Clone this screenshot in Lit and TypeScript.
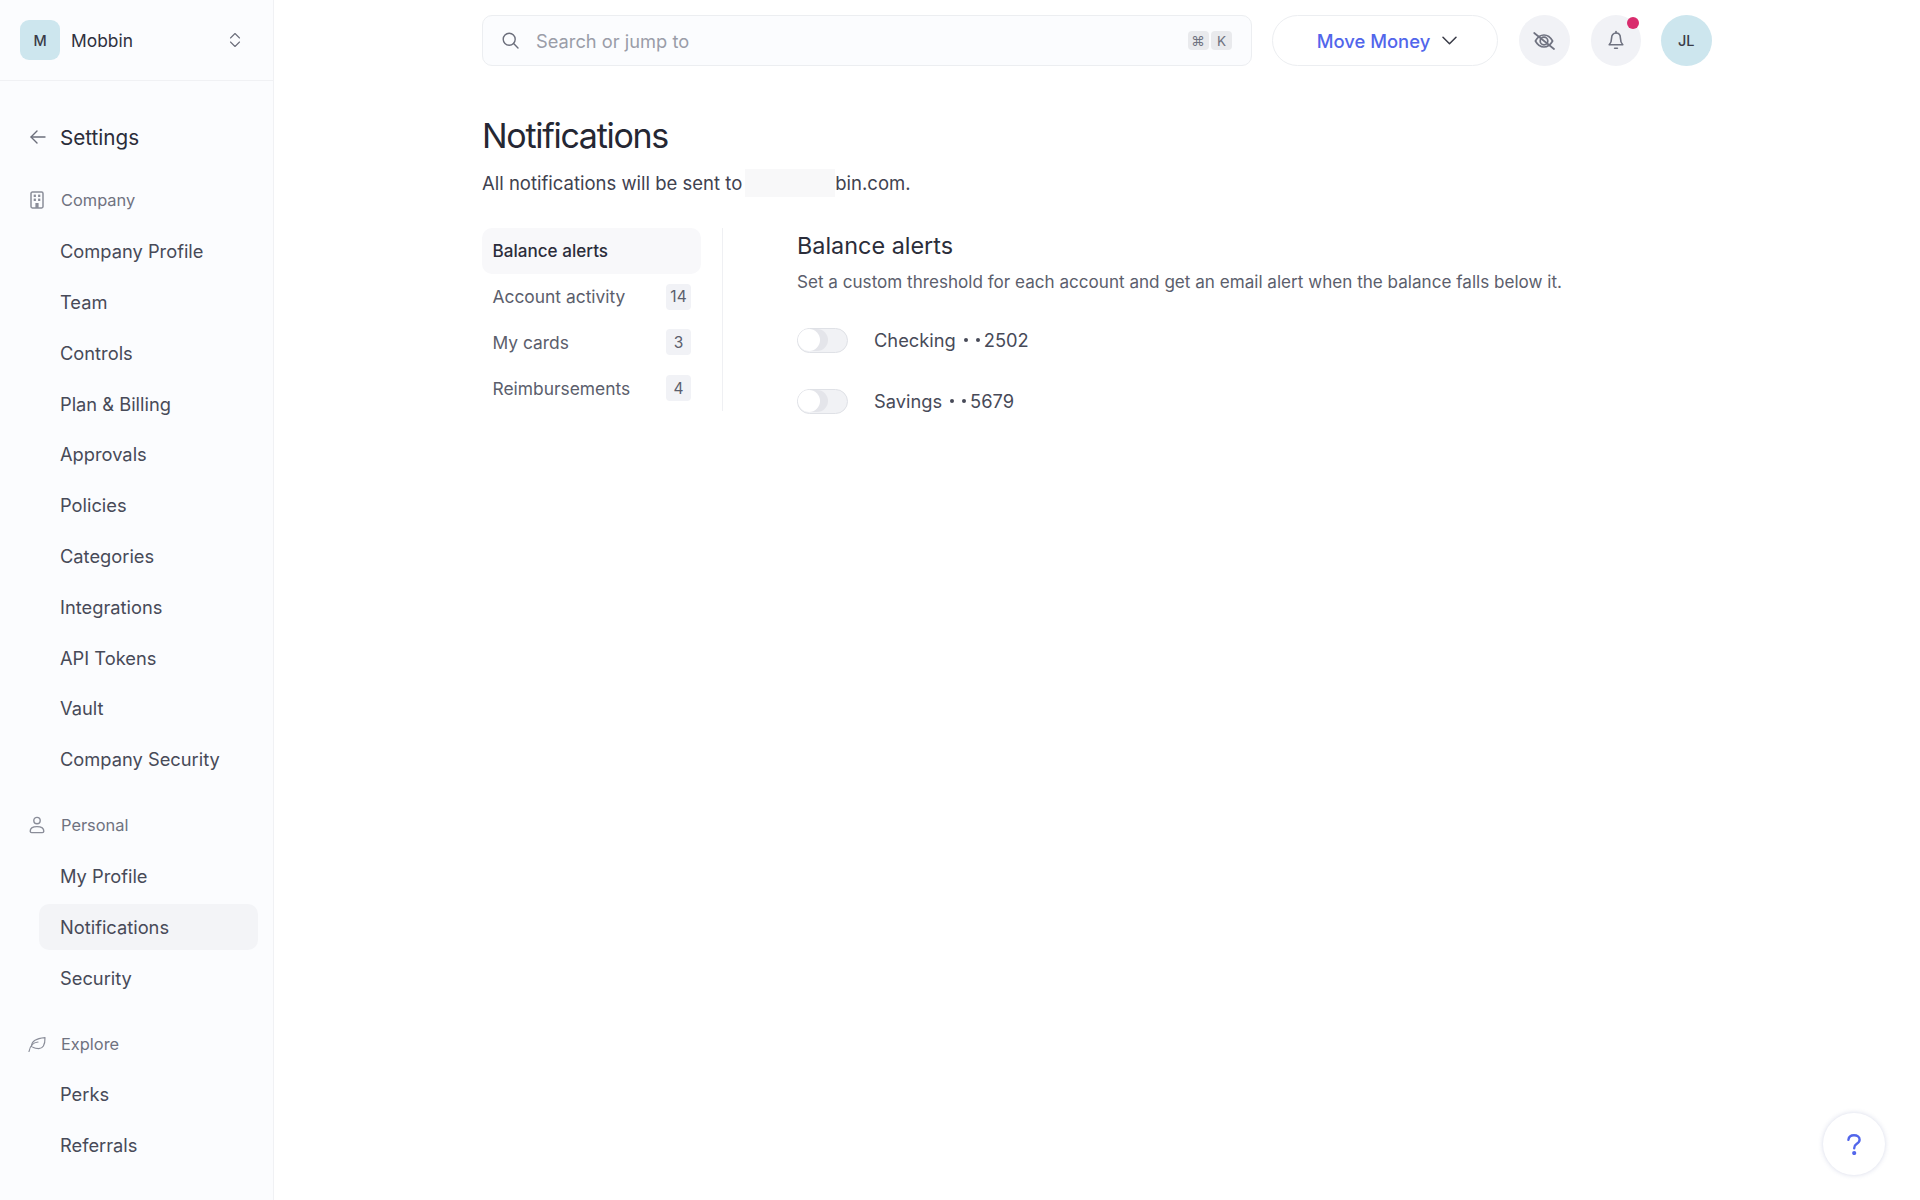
import { LitElement, html, css, svg } from "lit";
import { customElement } from "lit/decorators.js";

const icons = {
  updown: svg`<svg class="updown" viewBox="0 0 12 16" fill="none" stroke="#6b6e7b" stroke-width="1.1" stroke-linecap="round" stroke-linejoin="round"><path d="M1.5 6 6 1.5 10.5 6"/><path d="M1.5 10 6 14.5 10.5 10"/></svg>`,
  back: svg`<svg class="back" viewBox="0 0 16 14" fill="none" stroke="#6b6e7b" stroke-width="1.4" stroke-linecap="round" stroke-linejoin="round"><path d="M15 7H1.2"/><path d="M7 1 1 7l6 6"/></svg>`,
  building: svg`<svg class="sec" viewBox="0 0 18 18" fill="none"><rect x="3" y="1" width="12" height="16" rx="1.4" fill="none" stroke="#8a8d99" stroke-width="1.5"/><g fill="#8a8d99"><rect x="5.7" y="3.6" width="2.2" height="2.4"/><rect x="10.1" y="3.6" width="2.2" height="2.4"/><rect x="5.7" y="7.6" width="2.2" height="2.4"/><rect x="10.1" y="7.6" width="2.2" height="2.4"/><rect x="7.4" y="12" width="3.2" height="5"/></g></svg>`,
  person: svg`<svg class="sec" viewBox="0 0 18 18" fill="none" stroke="#8a8d99" stroke-width="1.4"><circle cx="9" cy="4.6" r="3.2"/><path d="M2.2 15.2c0-3 3-4.6 6.8-4.6s6.8 1.6 6.8 4.6c0 1-.6 1.4-1.5 1.4H3.7c-.9 0-1.5-.4-1.5-1.4Z"/></svg>`,
  leaf: svg`<svg class="sec" viewBox="0 0 18 18" fill="none" stroke="#8a8d99" stroke-width="1.2" stroke-linecap="round" stroke-linejoin="round"><path d="M1 16.5C2 11 5 7.5 10 7"/><path d="M3.6 11.6C3.4 6.5 7 3.4 17 2.6c.2 7.6-2.4 11-6.2 11-2.6 0-4.2-.4-6-1.4"/></svg>`,
  search: svg`<svg class="search-ic" viewBox="0 0 17 17" fill="none" stroke="#6b6e7b" stroke-width="1.4" stroke-linecap="round"><circle cx="7.2" cy="7.2" r="6"/><path d="M11.6 11.6 16 16"/></svg>`,
  chev: svg`<svg class="chev" viewBox="0 0 15 9" fill="none" stroke="#3a3c48" stroke-width="1.5" stroke-linecap="round" stroke-linejoin="round"><path d="M1 1.2 7.5 7.8 14 1.2"/></svg>`,
  eye: svg`<svg class="ic" viewBox="0 0 22 22" fill="none" stroke="#6f7280" stroke-width="1.7" stroke-linecap="round" stroke-linejoin="round"><path d="M2.4 11C4.6 7 7.6 5 11 5s6.4 2 8.6 6c-2.2 4-5.2 6-8.6 6s-6.4-2-8.6-6Z"/><circle cx="11" cy="11" r="3.8"/><path d="M1.2 3 21 19"/></svg>`,
  bell: svg`<svg class="ic" viewBox="0 0 22 22" fill="none" stroke="#6f7280" stroke-width="1.6" stroke-linecap="round" stroke-linejoin="round"><path d="M11 3c-2.8 0-4.4 2.1-4.4 5 0 3.8-1 5.4-2.4 6.8h13.6c-1.4-1.4-2.4-3-2.4-6.8 0-2.9-1.6-5-4.4-5Z"/><path d="M11 1.5V3"/><path d="M9.6 18.3h2.8"/></svg>`,
  help: svg`<svg class="help-ic" viewBox="0 0 14 21" fill="none" stroke="#5266eb" stroke-width="2.4" stroke-linecap="round"><path d="M1.4 5.8C1.8 2.9 4 1.3 7 1.3c3.2 0 5.6 1.8 5.6 4.4 0 2.2-1.4 3.2-3.1 4.3C7.9 11 7.2 12 7.2 14.2"/><circle cx="7.2" cy="19" r=".9" fill="#5266eb"/></svg>`,
};

const sections = [
  { label: "Company", icon: icons.building, items: ["Company Profile", "Team", "Controls", "Plan & Billing", "Approvals", "Policies", "Categories", "Integrations", "API Tokens", "Vault", "Company Security"] },
  { label: "Personal", icon: icons.person, items: ["My Profile", "Notifications", "Security"] },
  { label: "Explore", icon: icons.leaf, items: ["Perks", "Referrals"] },
];

const subnav = [
  { label: "Balance alerts", active: true },
  { label: "Account activity", count: "14" },
  { label: "My cards", count: "3" },
  { label: "Reimbursements", count: "4" },
];

const accounts = [
  { name: "Checking", tail: "2502" },
  { name: "Savings", tail: "5679" },
];

@customElement("app-root")
export class AppRoot extends LitElement {
  static styles = css`
    :host {
      display: flex;
      width: 1920px;
      height: 1200px;
      overflow: hidden;
      position: relative;
      background: #fff;
      font-family: Inter, "Liberation Sans", sans-serif;
      color: #2b2d3a;
    }
    * { box-sizing: border-box; }
    svg { display: block; flex: none; }

    .side {
      width: 274px;
      flex: none;
      height: 1200px;
      background: #fbfcfe;
      border-right: 1px solid #f0f1f4;
    }
    .org {
      height: 81px;
      border-bottom: 1px solid #f0f1f4;
      padding: 0 32px 0 20px;
      display: flex;
      align-items: center;
    }
    .org-av {
      width: 40px;
      height: 40px;
      border-radius: 9px;
      background: #cde6ee;
      display: flex;
      align-items: center;
      justify-content: center;
      font-size: 14.5px;
      font-weight: 500;
      color: #3a3c48;
    }
    .org-name { margin-left: 11px; font-size: 17.4px; flex: 1; color: #2f313e; }
    .updown { width: 12px; height: 16px; }

    .settings {
      display: flex;
      align-items: center;
      height: 46px;
      margin-top: 33px;
      padding-left: 30px;
      font-size: 20.7px;
      color: #2b2d3a;
    }
    .back { width: 16px; height: 14px; margin-right: 14px; }

    nav { margin-top: 17.5px; display: flex; flex-direction: column; gap: 20.2px; }
    .section { display: flex; flex-direction: column; gap: 5px; }
    .sec-label {
      height: 45.8px;
      display: flex;
      align-items: center;
      padding-left: 28px;
      font-size: 16.4px;
      color: #6f7280;
    }
    .sec { width: 18px; height: 18px; margin-right: 15px; }
    .item {
      height: 45.8px;
      margin: 0 15px 0 39px;
      padding-left: 21px;
      display: flex;
      align-items: center;
      border-radius: 10px;
      font-size: 18.3px;
      color: #474a58;
    }
    .item.active { background: #f3f4f7; }

    .main { flex: 1; padding: 15px 0 0 208px; min-width: 0; }
    .top { display: flex; align-items: center; height: 51px; }
    .search {
      width: 770px;
      height: 51px;
      border: 1.5px solid #eceef1;
      border-radius: 10px;
      background: #fbfcfe;
      display: flex;
      align-items: center;
      padding: 0 19px;
    }
    .search-ic { width: 17px; height: 17px; margin-right: 17px; }
    .placeholder { flex: 1; font-size: 18.3px; color: #9a9da8; }
    .kbd {
      width: 21px;
      height: 19px;
      margin-left: 2.5px;
      border-radius: 4px;
      background: #e9eaed;
      display: flex;
      align-items: center;
      justify-content: center;
      font-size: 13.5px;
      color: #6f7280;
    }
    .move {
      width: 226px;
      height: 51px;
      margin-left: 20px;
      border: 1.5px solid #eceef1;
      border-radius: 26px;
      display: flex;
      align-items: center;
      justify-content: center;
      gap: 12px;
      padding-left: 4px;
      font-size: 18.4px;
      font-weight: 500;
      color: #5266eb;
    }
    .chev { width: 15px; height: 9px; }
    .round {
      width: 50.5px;
      height: 51px;
      border-radius: 50%;
      background: #f1f2f6;
      display: flex;
      align-items: center;
      justify-content: center;
      position: relative;
      margin-left: 21px;
    }
    .ic { width: 22px; height: 22px; }
    .dot {
      position: absolute;
      width: 12px;
      height: 12px;
      top: 2px;
      right: 2px;
      border-radius: 50%;
      background: #d92c6d;
    }
    .avatar {
      background: #cde6ee;
      margin-left: 20px;
      font-size: 14.5px;
      font-weight: 500;
      color: #3a3c48;
    }

    h1 {
      margin: 51px 0 0;
      height: 38px;
      line-height: 38px;
      font-size: 34px;
      font-weight: 400;
      letter-spacing: -1.3px;
      color: #252733;
    }
    .sub {
      margin-top: 14px;
      height: 28px;
      display: flex;
      align-items: center;
      font-size: 18.5px;
      color: #3f4250;
    }
    .redact { width: 90px; height: 28px; margin: 0 0 0 3px; background: #f8f8f9; }

    .content { display: flex; margin-top: 31px; }
    .subnav {
      width: 241px;
      height: 183px;
      padding-right: 21px;
      border-right: 1px solid #eff0f3;
      display: flex;
      flex-direction: column;
    }
    .sub-item {
      height: 46px;
      padding: 0 10px 0 10.5px;
      border-radius: 10px;
      display: flex;
      align-items: center;
      justify-content: space-between;
      font-size: 17.4px;
      color: #5b5e6c;
    }
    .sub-item.active { background: #f8f8fa; font-size: 17.1px; font-weight: 500; color: #2b2d3a; }
    .count {
      min-width: 25px;
      height: 26px;
      border-radius: 4px;
      background: #f1f2f6;
      display: flex;
      align-items: center;
      justify-content: center;
      font-size: 15.5px;
      color: #5b5e6c;
    }
    .detail { margin-left: 74px; }
    h2 {
      margin: 0;
      height: 36px;
      line-height: 36px;
      font-size: 23.4px;
      font-weight: 400;
      color: #2b2d3a;
    }
    .desc {
      height: 36px;
      line-height: 36px;
      font-size: 17.1px;
      color: #5b5e6c;
    }
    .rows { margin-top: 27.5px; display: flex; flex-direction: column; gap: 36px; }
    .row { display: flex; align-items: center; height: 25px; gap: 26px; font-size: 18.3px; color: #474a58; }
    .acct { display: flex; align-items: center; }
    .dots { display: flex; align-items: center; gap: 8px; margin: 0 4px 0 8px; }
    .dots i { width: 4px; height: 4px; border-radius: 50%; background: #474a58; }
    .toggle {
      width: 51px;
      height: 25px;
      border-radius: 13px;
      border: 1.5px solid #dfe1e6;
      background: #f1f2f5;
      position: relative;
    }
    .toggle::before {
      content: "";
      position: absolute;
      left: 0;
      top: 0;
      width: 30px;
      height: 22px;
      border-radius: 11px;
      background: #e4e5ea;
    }
    .toggle::after {
      content: "";
      position: absolute;
      left: 0;
      top: 0;
      width: 22px;
      height: 22px;
      border-radius: 50%;
      background: #fff;
    }
    .help {
      position: absolute;
      left: 1823px;
      top: 1113px;
      width: 62px;
      height: 62px;
      border-radius: 50%;
      background: #fff;
      box-shadow: 0 0 5px rgba(70, 80, 150, 0.22);
      display: flex;
      align-items: center;
      justify-content: center;
    }
    .help-ic { width: 14px; height: 21px; }
  `;

  render() {
    return html`
      <aside class="side">
        <div class="org">
          <div class="org-av">M</div>
          <div class="org-name">Mobbin</div>
          ${icons.updown}
        </div>
        <div class="settings">${icons.back}<span>Settings</span></div>
        <nav>
          ${sections.map(
            (s) => html`
              <div class="section">
                <div class="sec-label">${s.icon}<span>${s.label}</span></div>
                ${s.items.map((i) => html`<div class="item ${i === "Notifications" ? "active" : ""}">${i}</div>`)}
              </div>
            `
          )}
        </nav>
      </aside>
      <main class="main">
        <div class="top">
          <div class="search">
            ${icons.search}
            <span class="placeholder">Search or jump to</span>
            <span class="kbd">⌘</span><span class="kbd">K</span>
          </div>
          <div class="move">Move Money ${icons.chev}</div>
          <div class="round">${icons.eye}</div>
          <div class="round">${icons.bell}<span class="dot"></span></div>
          <div class="round avatar">JL</div>
        </div>
        <h1>Notifications</h1>
        <div class="sub">All notifications will be sent to<span class="redact"></span>bin.com.</div>
        <div class="content">
          <div class="subnav">
            ${subnav.map(
              (s) => html`<div class="sub-item ${s.active ? "active" : ""}">
                <span>${s.label}</span>${s.count ? html`<span class="count">${s.count}</span>` : ""}
              </div>`
            )}
          </div>
          <div class="detail">
            <h2>Balance alerts</h2>
            <div class="desc">Set a custom threshold for each account and get an email alert when the balance falls below it.</div>
            <div class="rows">
              ${accounts.map(
                (a) => html`<div class="row">
                  <span class="toggle"></span>
                  <span class="acct"><span>${a.name}</span><span class="dots"><i></i><i></i></span><span>${a.tail}</span></span>
                </div>`
              )}
            </div>
          </div>
        </div>
      </main>
      <div class="help">${icons.help}</div>
    `;
  }
}
